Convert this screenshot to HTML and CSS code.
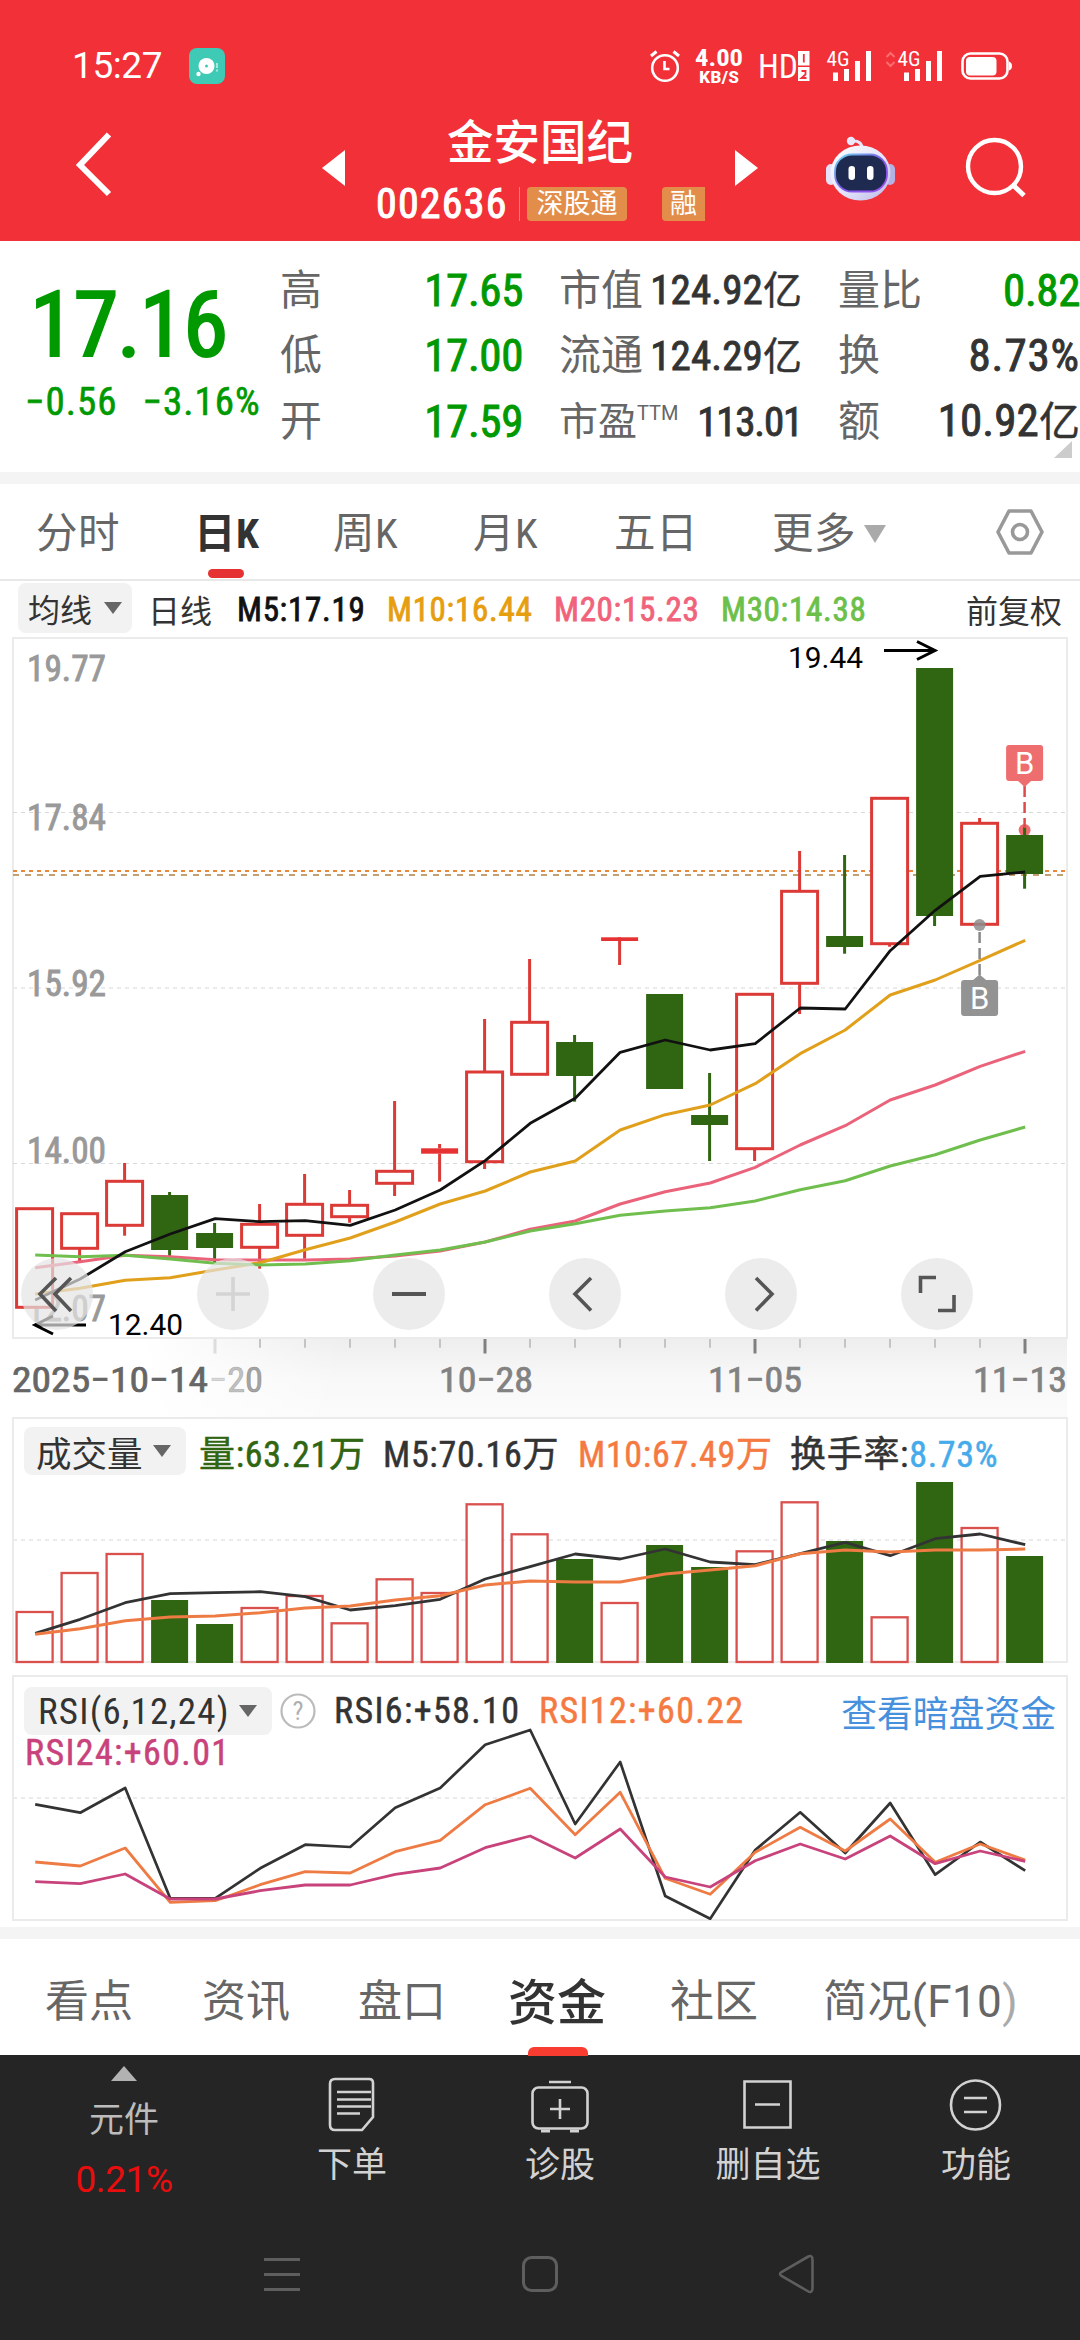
FILE: index.html
```html
<!DOCTYPE html>
<html lang="zh-CN">
<head>
<meta charset="utf-8">
<title>金安国纪 002636</title>
<link rel="stylesheet" href="styles.css">
</head>
<body>
<div class="app">
  <header class="header">
    <div class="status">
      <span class="clock">15:27</span>
      <svg class="app-badge" width="36" height="36" viewBox="0 0 36 36">
        <rect width="36" height="36" rx="8" fill="#3fcab6"/>
        <circle cx="17.500" cy="18" r="8" fill="#fff"/><circle cx="17.500" cy="18" r="1.500" fill="#3fcab6"/>
        <circle cx="9.500" cy="26" r="2.200" fill="#fff"/>
        <path d="M28 15v5M28 21.500v2" stroke="#c9f3ec" stroke-width="1.500"/>
      </svg>
      <svg class="status-icons" width="364" height="56" viewBox="648 38 364 56" fill="none" stroke="#fff">
        <circle cx="665" cy="68" r="12.800" stroke-width="2.600"/>
        <path d="M664.500 61v8h5" stroke-width="2.600"/>
        <path d="M651 56l5.500-4.500M679 56l-5.500-4.500" stroke-width="3"/>
        <g fill="#fff" stroke="none" class="cond">
          <text x="695" y="66" font-size="24" font-weight="700" textLength="48" lengthAdjust="spacingAndGlyphs">4.00</text>
          <text x="699" y="83" font-size="17" font-weight="700" textLength="40" lengthAdjust="spacingAndGlyphs">KB/S</text>
          <text x="758" y="78" font-size="33" textLength="40" lengthAdjust="spacingAndGlyphs">HD</text>
          <text x="826.500" y="66" font-size="20" textLength="23" lengthAdjust="spacingAndGlyphs">4G</text>
          <text x="897.500" y="66" font-size="20" textLength="23" lengthAdjust="spacingAndGlyphs">4G</text>
          <rect x="798" y="51" width="11.500" height="14.500"/><rect x="798" y="67" width="11.500" height="14"/>
          <path d="M833 72.500h5V81h-5zM844 69h5v12h-5zM855 61h5v20h-5zM866 51h5v30h-5zM904 72.500h5V81h-5zM915 69h5v12h-5zM926 61h5v20h-5zM937 51h5v30h-5z"/>
          <rect x="966" y="57" width="30.500" height="18.500" rx="4"/>
          <path d="M1009 61.500q3 1 3 4.500t-3 4.500z"/>
        </g>
        <path d="M803.800 54v8.500M801.500 71h4v3.500l-4 3.500h5" stroke="#f13038" stroke-width="1.800"/>
        <path d="M886.500 57l4-4 4 4M886.500 62l4 4 4-4" stroke="#ff6d70" stroke-width="2"/>
        <rect x="962.500" y="53.500" width="45" height="25" rx="8" stroke-width="2.600"/>
      </svg>
    </div>
    <div class="titlebar">
      <svg class="back" width="44" height="68" viewBox="0 0 44 68"><path d="M38 3.500L9 34l29 29" fill="none" stroke="#fff" stroke-width="6"/></svg>
      <svg class="prev" width="23" height="36" viewBox="0 0 23 36"><path d="M0 18L23 0v36z" fill="#fff"/></svg>
      <div class="stock">
        <h1 class="stock-name">金安国纪</h1>
        <div class="stock-meta"><span class="code">002636</span><span class="tag">深股通</span><span class="tag tag-rong">融</span></div>
      </div>
      <svg class="next" width="23" height="36" viewBox="0 0 23 36"><path d="M23 18L0 0v36z" fill="#fff"/></svg>
      <svg class="robot" width="72" height="66" viewBox="0 0 72 66">
        <defs>
          <linearGradient id="shell" x1="0" y1="0" x2="1" y2="1"><stop offset="0" stop-color="#fff"/><stop offset=".55" stop-color="#e4e3fa"/><stop offset="1" stop-color="#b9b7e6"/></linearGradient>
          <linearGradient id="rim" x1="0" y1="0" x2="1" y2="1"><stop offset="0" stop-color="#6fdcf2"/><stop offset=".5" stop-color="#7a5be8"/><stop offset="1" stop-color="#a04df0"/></linearGradient>
        </defs>
        <path d="M27 5q10-1 10.500 9" fill="none" stroke="#e8e4fa" stroke-width="3"/>
        <circle cx="26" cy="5" r="4.200" fill="#ece8fb"/>
        <rect x="1" y="28" width="10" height="21" rx="5" fill="#e4e1f8"/><rect x="60" y="28" width="10" height="21" rx="5" fill="#b5b1e4"/>
        <ellipse cx="35.500" cy="37" rx="30" ry="27.500" fill="url(#shell)"/>
        <rect x="10" y="18.500" width="52" height="37" rx="17" fill="#1f2a50" stroke="url(#rim)" stroke-width="1.800"/>
        <rect x="23.500" y="30" width="6.500" height="14" rx="3.200" fill="#fff"/><rect x="42" y="30" width="6.500" height="14" rx="3.200" fill="#fff"/>
      </svg>
      <svg class="search" width="62" height="62" viewBox="0 0 62 62" fill="none" stroke="#fff" stroke-width="4.400"><circle cx="29.500" cy="29.500" r="26.500"/><path d="M48 48l11 10.500" stroke-width="5"/></svg>
    </div>
  </header>

  <section class="quote">
    <div class="price">
      <div class="last">17.16</div>
      <div class="change"><span>−0.56</span><span>−3.16%</span></div>
    </div>
    <dl class="stats">
      <dt>高</dt><dd class="down">17.65</dd><dt>市值</dt><dd class="mid">124.92<b>亿</b></dd><dt>量比</dt><dd class="down">0.82</dd>
      <dt>低</dt><dd class="down">17.00</dd><dt>流通</dt><dd class="mid">124.29<b>亿</b></dd><dt>换</dt><dd class="turnover">8.73%</dd>
      <dt>开</dt><dd class="down">17.59</dd><dt class="ttm">市盈<sup>TTM</sup></dt><dd class="mid pe">113.01</dd><dt>额</dt><dd>10.92<b>亿</b></dd>
    </dl>
    <svg class="corner" width="18" height="17" viewBox="0 0 18 17"><path d="M18 0v17H0z" fill="#ccc"/></svg>
  </section>

  <nav class="periods">
    <span>分时</span><span class="active">日K</span><span>周K</span><span>月K</span><span>五日</span>
    <span class="more">更多<svg width="22" height="18" viewBox="0 0 22 18"><path d="M0 0h22L11 18z" fill="#aaa"/></svg></span>
    <svg class="gear" width="50" height="48" viewBox="0 0 50 48" fill="none" stroke="#999" stroke-width="3.600" stroke-linejoin="round"><path d="M14 3h22l11 21-11 21H14L3 24z"/><circle cx="25" cy="24" r="7.500"/></svg>
  </nav>

  <div class="ma-row">
    <span class="pill">均线<i class="caret"></i></span>
    <span class="cn">日线</span><span class="num c-black">M5:17.19</span><span class="num c-gold">M10:16.44</span><span class="num c-pink">M20:15.23</span><span class="num c-green">M30:14.38</span>
    <span class="cn adjust">前复权</span>
  </div>

  <section class="kline">
    <svg id="kline" width="1080" height="784" viewBox="0 635 1080 784"></svg>
    <div class="tools">
      <span><svg width="72" height="72" viewBox="0 0 72 72"><path d="M35 20L19 36l16 17M50 20L34 36l16 17"/></svg></span>
      <span class="off"><svg width="72" height="72" viewBox="0 0 72 72"><path d="M19 36h34M36 19v34"/></svg></span>
      <span><svg width="72" height="72" viewBox="0 0 72 72"><path d="M19 36h34" stroke-width="4"/></svg></span>
      <span><svg width="72" height="72" viewBox="0 0 72 72"><path d="M42 20L26 36l16 16.500"/></svg></span>
      <span><svg width="72" height="72" viewBox="0 0 72 72"><path d="M31 20l16 16-16 16.500"/></svg></span>
      <span><svg width="72" height="72" viewBox="0 0 72 72"><path d="M35 19.500H19.500V35M37 52.500h16V37"/></svg></span>
    </div>
  </section>

  <section class="panel volume">
    <div class="legend">
      <span class="pill">成交量<i class="caret"></i></span>
      <span class="c-vol">量:63.21万</span><span class="c-dark">M5:70.16万</span><span class="c-orange">M10:67.49万</span><span class="c-dark rate">换手率:<em>8.73%</em></span>
    </div>
    <svg id="volume" width="1080" height="192" viewBox="0 1479 1080 192"></svg>
  </section>

  <section class="panel rsi">
    <svg id="rsi" width="1080" height="248" viewBox="0 1674 1080 248"></svg>
    <div class="legend">
      <span class="pill">RSI(6,12,24)<i class="caret"></i></span>
      <svg class="help" width="38" height="38" viewBox="0 0 38 38"><circle cx="19" cy="19" r="16.500" fill="none" stroke="#bbb" stroke-width="2.200"/><text x="19" y="28" text-anchor="middle" font-size="26" fill="#b0b0b0">?</text></svg>
      <span class="c-dark">RSI6:+58.10</span><span class="c-orange">RSI12:+60.22</span>
      <a class="link">查看暗盘资金</a>
      <span class="c-magenta">RSI24:+60.01</span>
    </div>
  </section>

  <nav class="sections">
    <span>看点</span><span>资讯</span><span>盘口</span><span class="active">资金</span><span>社区</span><span class="f10">简况(F10<i>)</i></span>
  </nav>

  <footer class="bottom">
    <div class="actions">
      <div class="board"><svg width="26" height="15" viewBox="0 0 26 15"><path d="M13 0l13 15H0z" fill="#b2b2b2"/></svg><span>元件</span><strong>0.21%</strong></div>
      <div class="action"><svg width="60" height="58" viewBox="0 0 60 58"><path d="M11 4h34q4 0 4 4v34L38 55H11q-5 0-5-5V9q0-5 5-5zM13 17h34M13 24.500h34M13 31.500h34M13 38.500h23" transform="translate(2)"/></svg><span>下单</span></div>
      <div class="action"><svg width="60" height="58" viewBox="0 0 60 58"><rect x="2.500" y="12.500" width="55" height="41" rx="6"/><path d="M19 7h22M30 24v20M20 34h20"/><path d="M11 56h9M40 56h9" stroke-width="3"/></svg><span>诊股</span></div>
      <div class="action"><svg width="60" height="58" viewBox="0 0 60 58"><path d="M6.500 6.500h46v46h-46zM17 29.500h25"/></svg><span>删自选</span></div>
      <div class="action"><svg width="60" height="58" viewBox="0 0 60 58"><circle cx="29.500" cy="30" r="24.500"/><path d="M18 23h23M18 37h23"/></svg><span>功能</span></div>
    </div>
    <svg class="sysnav" width="1080" height="44" viewBox="0 0 1080 44" fill="none" stroke="#5e5e5e" stroke-width="3">
      <path d="M264 7.500h36M264 22.500h36M264 37.500h36"/>
      <rect x="523.500" y="5.500" width="33" height="33" rx="8"/>
      <path d="M812.500 8v28q0 6-5 3l-26-15q-3-2 0-4l26-15q5-3 5 3z" stroke-width="2.600"/>
    </svg>
  </footer>
</div>
<script src="charts.js"></script>
</body>
</html>
```
FILE: styles.css
```css
* { box-sizing: border-box; margin: 0; padding: 0; }
body { width: 1080px; background: #fff; color: #333; font-family: Roboto, "Noto Sans CJK SC", sans-serif; font-stretch: 85%; }
svg { display: block; flex: none; }
span, dt, dd, a { white-space: nowrap; }
i, em { font-style: normal; }
.app { width: 1080px; height: 2340px; display: flex; flex-direction: column; overflow: hidden; }

.header { height: 241px; background: #f13038; color: #fff; flex: none; }
.status { height: 112px; padding: 46px 68px 0 72px; display: flex; }
.clock { font-size: 37px; line-height: 40px; font-stretch: 100%; width: 117px; height: 40px; letter-spacing: -.4px; }
.app-badge { margin-top: 2px; }
.status-icons { margin: -8px 0 0 auto; }
.cond text { font-family: Roboto, sans-serif; font-stretch: 85%; }
.titlebar { display: flex; height: 129px; padding-left: 71px; }
.back { margin-top: 19px; }
.prev { margin: 38px 0 0 207px; }
.stock { width: 390px; }
.stock-name { font-size: 46.5px; line-height: 56px; font-weight: 500; padding: 3px 0 0 102px; height: 66px; }
.stock-meta { display: flex; height: 36px; align-items: center; padding-left: 31px; margin-top: 8px; }
.code { font-size: 42px; line-height: 36px; width: 144px; letter-spacing: 1.2px; -webkit-text-stroke: 1px; }
.tag { background: #e38d4a; border-radius: 4px; height: 34px; line-height: 34px; font-size: 27px; width: 100px; text-align: center; margin-left: 7px; position: relative; }
.tag:not(.tag-rong)::before { content: ""; position: absolute; left: -8px; top: 0; width: 1px; height: 34px; background: #e38d4a; }
.tag-rong { width: 43px; margin-left: 35px; border-radius: 4px 0 0 4px; }
.next { margin: 38px 0 0 0; }
.robot { margin: 24px 0 0 67px; }
.search { margin: 25px 0 0 68px; }

.quote { height: 243px; border-bottom: 12px solid #f4f4f4; display: flex; position: relative; flex: none; }
.price { width: 279px; color: #090; }
.last { font-size: 91px; line-height: 100px; padding: 34px 0 0 30px; -webkit-text-stroke: 2.2px; letter-spacing: -1.4px; }
.change { display: flex; font-size: 39px; line-height: 46px; margin-top: 4px; padding-left: 25px; gap: 25px; letter-spacing: 1px; -webkit-text-stroke: .6px; }
.stats { display: grid; grid-template-columns: 60px 184px 112px 167px 117px 161px; grid-auto-rows: 65.5px; padding-top: 17px; align-items: center; width: 801px; }
.stats dt:nth-of-type(3n+1) { padding-left: 1px; }
.stats dt:nth-of-type(3n+2) { padding-left: 36px; }
.stats dt:nth-of-type(3n) { padding-left: 36px; }
.stats dt { font-size: 42px; color: #666; line-height: 60px; }
.stats dd { font-size: 45px; line-height: 60px; text-align: right; color: #333; -webkit-text-stroke: .9px; letter-spacing: .1px; }
.stats b { font-weight: 400; font-size: 41px; -webkit-text-stroke: .4px; }
.stats .mid { font-size: 41px; }
.stats .mid b { font-size: 39px; }
.stats .down { color: #090; letter-spacing: -.4px; }
.stats .turnover { letter-spacing: .9px; }
.stats .pe { letter-spacing: -1.2px; }
.stats sup { font-size: 20px; font-stretch: 100%; vertical-align: 15px; line-height: 0; }
.stats .ttm { font-size: 39px; }
.corner { position: absolute; right: 8px; top: 200px; }

.periods { height: 97px; border-bottom: 2px solid #e8e8e8; display: grid; grid-template-columns: 158px 139px 140px 141px 158px 223px 60px; padding-left: 36px; font-size: 41.5px; color: #666; flex: none; align-items: center; letter-spacing: .6px; }
.periods > span { line-height: 60px; padding-top: 4px; }
.periods .active { font-weight: 700; color: #333; position: relative; }
.periods .active::after { content: ""; position: absolute; left: 14px; top: 69px; width: 36px; height: 9px; border-radius: 5px; background: #e53131; }
.more { display: flex; align-items: center; gap: 8px; }

.ma-row { display: flex; height: 54px; align-items: center; font-size: 33px; color: #333; flex: none; padding: 0 18px; }
.ma-row .pill { width: 114px; height: 50px; padding: 0 10px; }
.ma-row .pill, .cn { font-size: 32px; }
.num { -webkit-text-stroke: .8px; letter-spacing: .7px; line-height: 40px; padding-top: 4px; }
.pill { background: #f2f2f2; border-radius: 8px; display: flex; align-items: center; justify-content: space-between; flex: none; }
.caret { border: 9px solid transparent; border-top: 12px solid #666; border-bottom: 0; }
.ma-row > span:nth-child(2) { margin-left: 16px; width: 89px; padding-top: 2px; }
.ma-row > .c-black { width: 150px; } .ma-row > .c-gold { width: 167px; } .ma-row > .c-pink { width: 167px; }
.ma-row .adjust { margin-left: auto; padding-top: 2px; }
.c-black { color: #111; } .c-gold { color: #e69e0f; } .c-pink { color: #f0637b; } .c-green { color: #6cc04a; }
.c-vol { color: #306512; } .c-dark { color: #333; } .c-orange { color: #f57a41; } .c-magenta { color: #c8427b; }

.kline { height: 784px; position: relative; flex: none; }
.tools { position: absolute; left: 21px; top: 623px; display: flex; gap: 104px; }
.tools span { width: 72px; height: 72px; border-radius: 50%; background: rgba(228,228,228,.7); }
.tools svg { fill: none; stroke: #555; stroke-width: 3.6; }
.tools .off svg { stroke: #d4d4d4; }

.panel { position: relative; flex: none; }
.volume { height: 252px; }
.legend { font-size: 36px; display: flex; align-items: center; }
.legend > span:not(.pill) { -webkit-text-stroke: .5px; letter-spacing: .7px; }
.legend .pill { height: 48px; font-size: 35.5px; }
.volume .legend { height: 62px; margin: -2px 12px 0; border: 2px solid #ebebeb; border-bottom: 0; padding: 4px 10px 0; }
.volume .pill { width: 162px; padding: 0 15px 0 12px; margin-right: 13px; }
.volume .c-vol { width: 184px; } .volume .c-vol + span { width: 195px; } .volume .c-orange { width: 211px; }
.volume .rate { margin-left: 1px; }
.legend em { color: #45abea; }
.rsi { height: 265px; border-bottom: 12px solid #f4f4f4; margin-top: 3px; }
.rsi .legend { position: absolute; left: 0; top: 0; width: 1080px; padding: 11px 24px 0; flex-wrap: wrap; }
.rsi .legend > span:not(.pill) { letter-spacing: 1.35px; }
.rsi .pill { width: 248px; padding: 0 15px 0 14px; font-size: 37px; letter-spacing: 1.2px; }
.help { margin: 0 17px 0 7px; }
.help text { font-family: Roboto, sans-serif; }
.rsi .legend > .c-dark { width: 205px; }
.link { margin-left: auto; font-size: 35.8px; color: #4790de; }
.rsi .legend > .c-magenta { width: 100%; line-height: 32px; margin-left: 1px; letter-spacing: 1.5px; }

.sections { height: 116px; display: grid; grid-template-columns: 157px 156px 150px 162px 153px 250px; padding: 2px 0 0 45px; align-items: center; font-size: 44px; color: #666; flex: none; }
.sections .active { font-size: 49px; font-weight: 500; color: #333; position: relative; }
.sections .active::after { content: ""; position: absolute; left: 20px; bottom: -22px; width: 60px; height: 9px; border-radius: 6px 6px 0 0; background: #f93c30; }
.sections i { color: #aaa; }
.f10 { font-stretch: 100%; letter-spacing: .4px; }

.bottom { height: 285px; background: #252525; flex: none; }
.actions { height: 197px; display: flex; color: #d2d2d2; font-size: 35px; }
.board { width: 248px; display: flex; flex-direction: column; align-items: center; padding-top: 11px; line-height: 50px; color: #bcbcbc; }
.board span { margin-top: 15px; }
.board strong { font-weight: 400; font-size: 37px; font-stretch: 100%; color: #e80e0e; margin-top: 9px; letter-spacing: -.4px; }
.action { width: 208px; display: flex; flex-direction: column; align-items: center; padding-top: 20px; line-height: 50px; }
.action svg { fill: none; stroke: #d2d2d2; stroke-width: 2.6; }
.action span { margin-top: 8px; }
.wide { font-stretch: 100%; }
```
FILE: charts.js
```javascript
// Shared x axis: 23 sessions, 45px apart
const X = i => 34.6 + 45 * i;
const RED = '#db3a36', GREEN = '#306512';
const line = (ys, color, w) =>
  `<polyline fill="none" stroke="${color}" stroke-width="${w}" stroke-linejoin="round" points="${ys.map((y, i) => (X(i) + 0.6).toFixed(1) + ',' + y).join(' ')}"/>`;
const rule = (y, color, w, dash) =>
  `<path d="M13 ${y}H1067" stroke="${color}" stroke-width="${w}" stroke-dasharray="${dash}"/>`;
const frame = (y1, y2) =>
  `<rect x="13" y="${y1}" width="1054" height="${y2 - y1}" fill="none" stroke="#ebebeb" stroke-width="2"/>`;
const label = (x, y, w, text, attrs) =>
  `<text x="${x}" y="${y}" textLength="${w}" lengthAdjust="spacingAndGlyphs" ${attrs}>${text}</text>`;

// [type, body top, body bottom, wick top, wick bottom]
const candles = [
  ['r', 1208.7, 1307.3], ['r', 1213.7, 1248.3, 0, 1261.7], ['r', 1181.3, 1225.3, 1163, 1235.7],
  ['g', 1195, 1250, 1192, 1256], ['g', 1233, 1248, 1223, 1263], ['r', 1224.3, 1247.3, 1204, 1268.7],
  ['r', 1204.3, 1235.3, 1174, 1258.7], ['r', 1205.3, 1216.7, 1190, 1222.7], ['r', 1171.3, 1183.3, 1101, 1196],
  ['f', 1148.3, 1153.7, 1144, 1181.7], ['r', 1072, 1161.7, 1019, 1169], ['r', 1022.3, 1074.3, 959, 0],
  ['g', 1042, 1076, 1035, 1101.7], ['f', 937.3, 941, 939, 965], ['g', 994, 1089],
  ['g', 1115, 1125, 1073, 1161], ['r', 994.3, 1148.7, 0, 1161], ['r', 891.3, 983.3, 851, 1014],
  ['g', 936, 947, 855, 953.7], ['r', 798.3, 943.7, 0, 946.7], ['g', 668, 916, 0, 926],
  ['r', 823.3, 924.3, 818, 0], ['g', 835, 874, 826.7, 888.7]
];

function candle([type, top, bottom, high, low], i) {
  const x = X(i), color = type === 'g' ? GREEN : RED;
  let s = '';
  if (high) s += `<path d="M${x} ${high}V${top}" stroke="${color}" stroke-width="3"/>`;
  if (low) s += `<path d="M${x} ${bottom}V${low}" stroke="${color}" stroke-width="3"/>`;
  const box = `x="${x - 18}" y="${top}" width="36" height="${bottom - top}"`;
  if (type === 'r') return s + `<rect ${box} fill="#fff" stroke="${RED}" stroke-width="3"/>`;
  return s + `<rect x="${x - 18.5}" y="${top}" width="37" height="${bottom - top}" fill="${type === 'g' ? GREEN : '#e63232'}"/>`;
}

const ma5 = [1300, 1279, 1251.7, 1234, 1218.7, 1221.7, 1220.7, 1225.3, 1210, 1190, 1160.7, 1123.3, 1098.3, 1052.3, 1040, 1050, 1043.7, 1008, 1009, 950.7, 910.3, 876.3, 872];
const ma10 = [1294, 1288.3, 1280.3, 1277.7, 1270, 1262.7, 1249.7, 1238, 1222, 1204, 1191, 1172, 1161, 1130, 1114.7, 1105, 1083.7, 1053.7, 1030, 995, 980, 960.3, 940.3];
const ma20 = [1267.7, 1261.7, 1255.3, 1256.7, 1259.7, 1260, 1260, 1259, 1256, 1251, 1242, 1229.3, 1221, 1204, 1191.7, 1183, 1167.3, 1145, 1125.7, 1100, 1085, 1066.3, 1051.3];
const ma30 = [1255, 1256.7, 1255.3, 1259, 1263.3, 1265, 1264, 1260.7, 1255, 1250, 1242, 1231, 1223.7, 1215.3, 1211, 1207.7, 1201, 1189.7, 1180.7, 1166, 1154.7, 1140, 1127];

const gray = 'font-size="36" fill="#999" stroke="#999" stroke-width=".9"';
let k = `<defs>
<linearGradient id="axis" x1="0" y1="0" x2="0" y2="1"><stop offset="0" stop-color="#eee"/><stop offset=".5" stop-color="#f8f8f8"/><stop offset="1" stop-color="#fbfbfb"/></linearGradient>
<linearGradient id="fade"><stop offset="0" stop-color="#fff"/><stop offset=".4" stop-color="#fff"/><stop offset="1" stop-color="#fff" stop-opacity="0"/></linearGradient></defs>
<rect x="13" y="1339" width="1054" height="80" fill="url(#axis)"/><rect x="12" y="1339" width="330" height="80" fill="url(#fade)"/>`;
k += frame(638, 1338);
k += rule(812.5, '#d9d9d9', 1, '4 4') + rule(988, '#ebebeb', 2, '4 4') + rule(1163.5, '#d9d9d9', 1, '4 4');
[['19.77', 681], ['17.84', 830], ['15.92', 996], ['14.00', 1163], ['12.07', 1321]].forEach(([t, y]) => {
  k += label(27, y, 79, t, gray);
});
k += rule(871, '#e8893a', 2, '4 4') + rule(875, '#c3a070', 2, '6 6');
k += `<circle cx="${X(22)}" cy="830" r="6" fill="#ee6e70"/>`;
k += candles.map(candle).join('');
k += line(ma20, '#ea637b', 3) + line(ma10, '#e1a01c', 3) + line(ma30, '#70bf4e', 3) + line(ma5, '#111', 2.8);
// High and low markers
k += label(788, 668, 75, '19.44', 'font-size="30" fill="#000" class="wide"') + label(108, 1335, 75, '12.40', 'font-size="30" fill="#000" class="wide"');
k += `<path d="M884 650.500H935M917 641.500L935 650.500L917 659.500M86 1325H35M53 1334L35 1325L53 1316" fill="none" stroke="#000" stroke-width="3"/>`;
// Trade markers
const xb = X(22), xs = X(21);
k += `<path d="M${xb} 786V828" stroke="#dc4a4a" stroke-width="2.500" stroke-dasharray="11 5"/>
<path d="M${xb - 18.5} 748q0-3 3-3h31q3 0 3 3v30q0 3-3 3h-9l-6.500 6-6.500-6h-9q-3 0-3-3z" fill="#ee6e70"/>
<text x="${xb}" y="774" text-anchor="middle" font-size="31" fill="#fff" class="wide">B</text>
<circle cx="${xs}" cy="925" r="6" fill="#8d8d8d" fill-opacity=".85"/><path d="M${xs} 932V976" stroke="#888" stroke-width="2.500" stroke-dasharray="11 5"/>
<path d="M${xs - 18.5} 983q0-3 3-3h9l6.500-5.500 6.500 5.500h9q3 0 3 3v30q0 3-3 3h-31q-3 0-3-3z" fill="#939393"/>
<text x="${xs}" y="1009" text-anchor="middle" font-size="31" fill="#fff" class="wide">B</text>`;
// Date axis
for (let i = 4; i < 23; i++) {
  const major = (i - 4) % 6 === 0;
  k += `<path d="M${X(i) + 0.4} 1339V${major ? 1353.5 : 1347.7}" stroke="${i === 4 ? '#ddd' : major ? '#808080' : '#c4c4c4'}" stroke-width="${major ? 3 : 2}"/>`;
}
const date = color => `font-size="35.500" fill="${color}" stroke="${color}" stroke-width=".7"`;
k += label(12, 1392, 196, '2025−10−14', date('#666'));
k += label(209, 1392, 54, '<tspan fill-opacity=".3" stroke-opacity=".3">−</tspan><tspan fill-opacity=".5" stroke-opacity=".5">2</tspan><tspan fill-opacity=".75" stroke-opacity=".75">0</tspan>', date('#888'));
[[439, '10−28'], [708, '11−05'], [973, '11−13']].forEach(([x, t]) => {
  k += label(x, 1392, 94, t, date('#828282'));
});
document.getElementById('kline').innerHTML = k;

const vol = [['r', 1612], ['r', 1573], ['r', 1554], ['g', 1600], ['g', 1624], ['r', 1608], ['r', 1596], ['r', 1623.3], ['r', 1579.3], ['r', 1593], ['r', 1504.3], ['r', 1534.3], ['g', 1559], ['r', 1603], ['g', 1545], ['g', 1567], ['r', 1551.3], ['r', 1502.3], ['g', 1541], ['r', 1617.3], ['g', 1482], ['r', 1528], ['g', 1556]];
let v = '<path d="M13 1479V1662H1067V1479" fill="none" stroke="#ebebeb" stroke-width="2"/>' + rule(1540, '#ebebeb', 2, '4 4');
v += vol.map(([t, y], i) => t === 'g'
  ? `<rect x="${X(i) - 18.5}" y="${y}" width="37" height="${1663 - y}" fill="${GREEN}"/>`
  : `<rect x="${X(i) - 18}" y="${y}" width="36" height="${1662 - y}" fill="#fff" stroke="#d9504d" stroke-width="2.300"/>`).join('');
v += line([1633.3, 1619.3, 1602.7, 1593.7, 1592.7, 1591.7, 1596.7, 1610, 1605.7, 1599.3, 1579, 1566.7, 1554, 1559, 1549, 1562, 1564.7, 1553.7, 1542.3, 1555.7, 1538.7, 1534, 1544.7], '#333', 2.8);
v += line([1634.3, 1628.7, 1620.7, 1617, 1616, 1612.7, 1608, 1606, 1600, 1595.7, 1585, 1581, 1582, 1582, 1574, 1570, 1565.7, 1553.7, 1550, 1552, 1550, 1550, 1549], '#ee7b43', 3);
document.getElementById('volume').innerHTML = v;

let r = frame(1676, 1920) + rule(1798, '#ebebeb', 2, '4 4');
r += line([1804.3, 1812.7, 1788, 1898.3, 1898.3, 1868.3, 1844.7, 1847, 1807.7, 1788, 1744.7, 1730, 1824, 1762, 1896, 1918.7, 1850, 1812.3, 1853, 1803, 1874.7, 1842, 1870.7], '#333', 2.7);
r += line([1862, 1866, 1848, 1902.3, 1900.7, 1884.7, 1871.7, 1873, 1851.7, 1840.3, 1804.7, 1788.3, 1834.7, 1792.3, 1878.3, 1894.3, 1852.3, 1827.3, 1851, 1819, 1862.3, 1844, 1860], '#ee7b43', 2.8);
r += line([1881.7, 1883.7, 1874, 1899, 1899, 1890.7, 1885, 1885, 1874.3, 1868, 1847.7, 1836, 1858, 1829, 1877, 1887, 1860.7, 1844, 1859, 1836, 1863.7, 1851, 1861.3], '#c8427b', 2.8);
document.getElementById('rsi').innerHTML = r;
```
